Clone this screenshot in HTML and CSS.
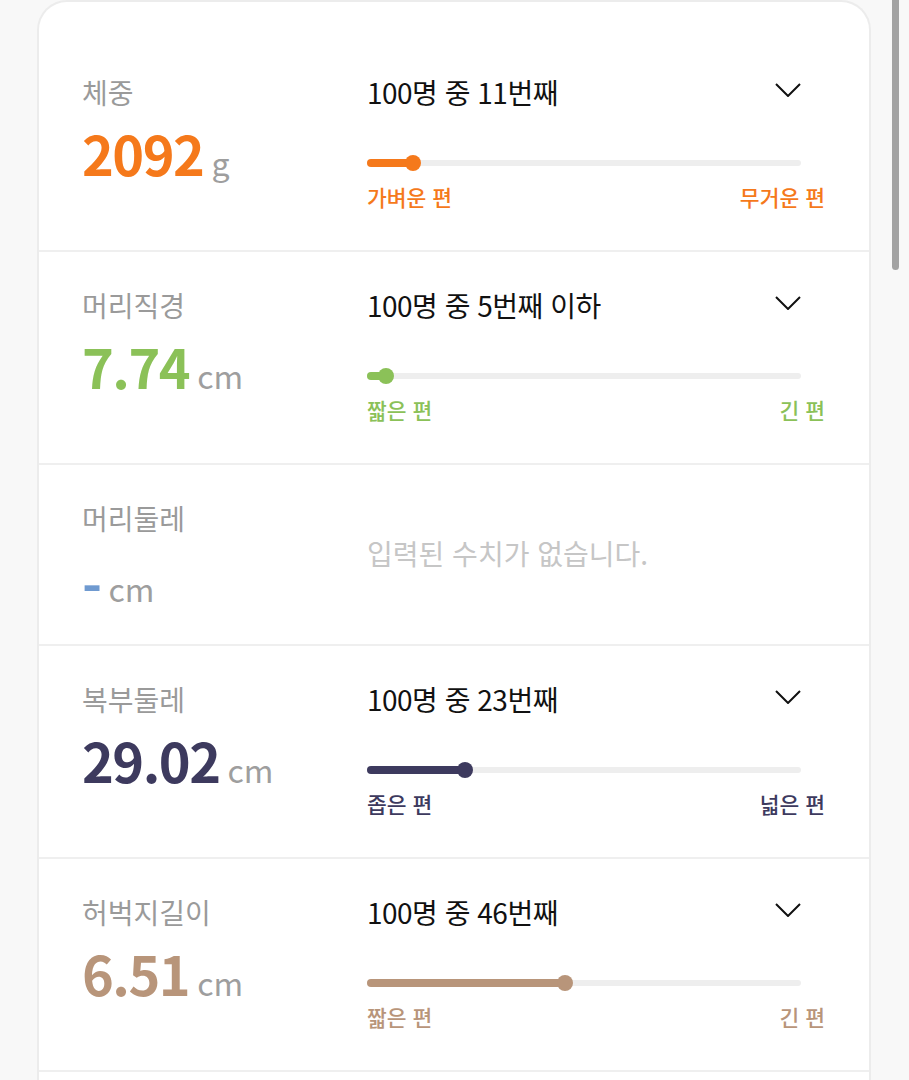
FILE: index.html
```html
<!DOCTYPE html>
<html lang="ko">
<head>
  <meta charset="utf-8">
  <title>성장 기록</title>
  <link rel="stylesheet" href="styles.css">
</head>
<body>
  <div class="scrollbar"></div>

  <div class="card">

    <div class="row orange">
      <div class="info">
        <div class="label">체중</div>
        <div class="value"><span class="num">2092</span><span class="unit">g</span></div>
      </div>
      <div class="rank">
        <div class="rank-head">
          <span>100명 중 11번째</span>
          <svg class="chevron" width="26" height="14" viewBox="0 0 26 14"><path d="M1 1 L13 13 L25 1"/></svg>
        </div>
        <div class="bar"><div class="fill" style="width: 46px"></div></div>
        <div class="ends"><span>가벼운 편</span><span>무거운 편</span></div>
      </div>
    </div>

    <div class="row green">
      <div class="info">
        <div class="label">머리직경</div>
        <div class="value"><span class="num">7.74</span><span class="unit">cm</span></div>
      </div>
      <div class="rank">
        <div class="rank-head">
          <span>100명 중 5번째 이하</span>
          <svg class="chevron" width="26" height="14" viewBox="0 0 26 14"><path d="M1 1 L13 13 L25 1"/></svg>
        </div>
        <div class="bar"><div class="fill" style="width: 19px"></div></div>
        <div class="ends"><span>짧은 편</span><span>긴 편</span></div>
      </div>
    </div>

    <div class="row blue">
      <div class="info">
        <div class="label">머리둘레</div>
        <div class="value"><span class="num dash">-</span><span class="unit">cm</span></div>
      </div>
      <div class="empty">입력된 수치가 없습니다.</div>
    </div>

    <div class="row navy">
      <div class="info">
        <div class="label">복부둘레</div>
        <div class="value"><span class="num">29.02</span><span class="unit">cm</span></div>
      </div>
      <div class="rank">
        <div class="rank-head">
          <span>100명 중 23번째</span>
          <svg class="chevron" width="26" height="14" viewBox="0 0 26 14"><path d="M1 1 L13 13 L25 1"/></svg>
        </div>
        <div class="bar"><div class="fill" style="width: 98px"></div></div>
        <div class="ends"><span>좁은 편</span><span>넓은 편</span></div>
      </div>
    </div>

    <div class="row brown">
      <div class="info">
        <div class="label">허벅지길이</div>
        <div class="value"><span class="num">6.51</span><span class="unit">cm</span></div>
      </div>
      <div class="rank">
        <div class="rank-head">
          <span>100명 중 46번째</span>
          <svg class="chevron" width="26" height="14" viewBox="0 0 26 14"><path d="M1 1 L13 13 L25 1"/></svg>
        </div>
        <div class="bar"><div class="fill" style="width: 198px"></div></div>
        <div class="ends"><span>짧은 편</span><span>긴 편</span></div>
      </div>
    </div>

  </div>
</body>
</html>
```

FILE: styles.css
```css
* {
  margin: 0;
  padding: 0;
  box-sizing: border-box;
}

body {
  background-color: #f8f8f8;
  font-family: "Noto Sans CJK KR", "Noto Sans", sans-serif;
  color: #111;
  overflow: hidden;
}

.scrollbar {
  position: fixed;
  top: 0;
  left: 892px;
  width: 7px;
  height: 270px;
  border-radius: 0 0 4px 4px;
  background-color: #a3a3a3;
}

.card {
  width: 834px;
  margin-left: 37px;
  padding-top: 37px;
  padding-bottom: 40px;
  background-color: #fff;
  border: 2px solid #ececec;
  border-bottom: none;
  border-radius: 30px 30px 0 0;
}

.row {
  display: flex;
  padding: 35px 44px 35px 43px;
  border-bottom: 2px solid #efefef;
}

.info {
  width: 285px;
  flex-shrink: 0;
}

.label {
  font-size: 28px;
  line-height: 36px;
  color: #9a9a9a;
}

.value {
  margin-top: 13px;
  display: flex;
  align-items: baseline;
  height: 60px;
  line-height: 60px;
}

.num {
  font-size: 54px;
  font-weight: 700;
  letter-spacing: -1.5px;
}

.dash {
  position: relative;
  top: 7px;
}

.unit {
  margin-left: 8px;
  font-size: 32px;
  line-height: 36px;
  color: #9e9e9e;
}

.rank {
  flex: 1;
}

.rank-head {
  display: flex;
  justify-content: space-between;
  align-items: center;
  padding-right: 24px;
  font-size: 28px;
  letter-spacing: -0.5px;
  line-height: 36px;
  color: #111;
}

.chevron {
  margin-top: -4px;
}

.chevron path {
  fill: none;
  stroke: #111;
  stroke-width: 2;
}

.bar {
  position: relative;
  height: 6px;
  margin: 50px 24px 5px 0;
  border-radius: 3px;
  background-color: #eeeeee;
}

.fill {
  position: relative;
  top: -1px;
  height: 8px;
  border-radius: 4px;
  background-color: currentColor;
}

/* knob at the end of the filled part */
.fill::after {
  content: "";
  position: absolute;
  right: -8px;
  top: -4px;
  width: 16px;
  height: 16px;
  border-radius: 50%;
  background-color: currentColor;
}

.ends {
  display: flex;
  justify-content: space-between;
  margin-top: 13px;
  font-size: 21.5px;
  font-weight: 500;
  line-height: 36px;
}

.empty {
  align-self: center;
  margin-top: -4px;
  font-size: 28px;
  line-height: 36px;
  color: #c6c6c6;
}

.orange .num, .orange .rank { color: #f5791b; }
.green .num, .green .rank { color: #8bc158; }
.blue .num { color: #6f9ad0; }
.navy .num, .navy .rank { color: #3d3a5e; }
.brown .num, .brown .rank { color: #b8957a; }

.rank .rank-head { color: #111; }
```
